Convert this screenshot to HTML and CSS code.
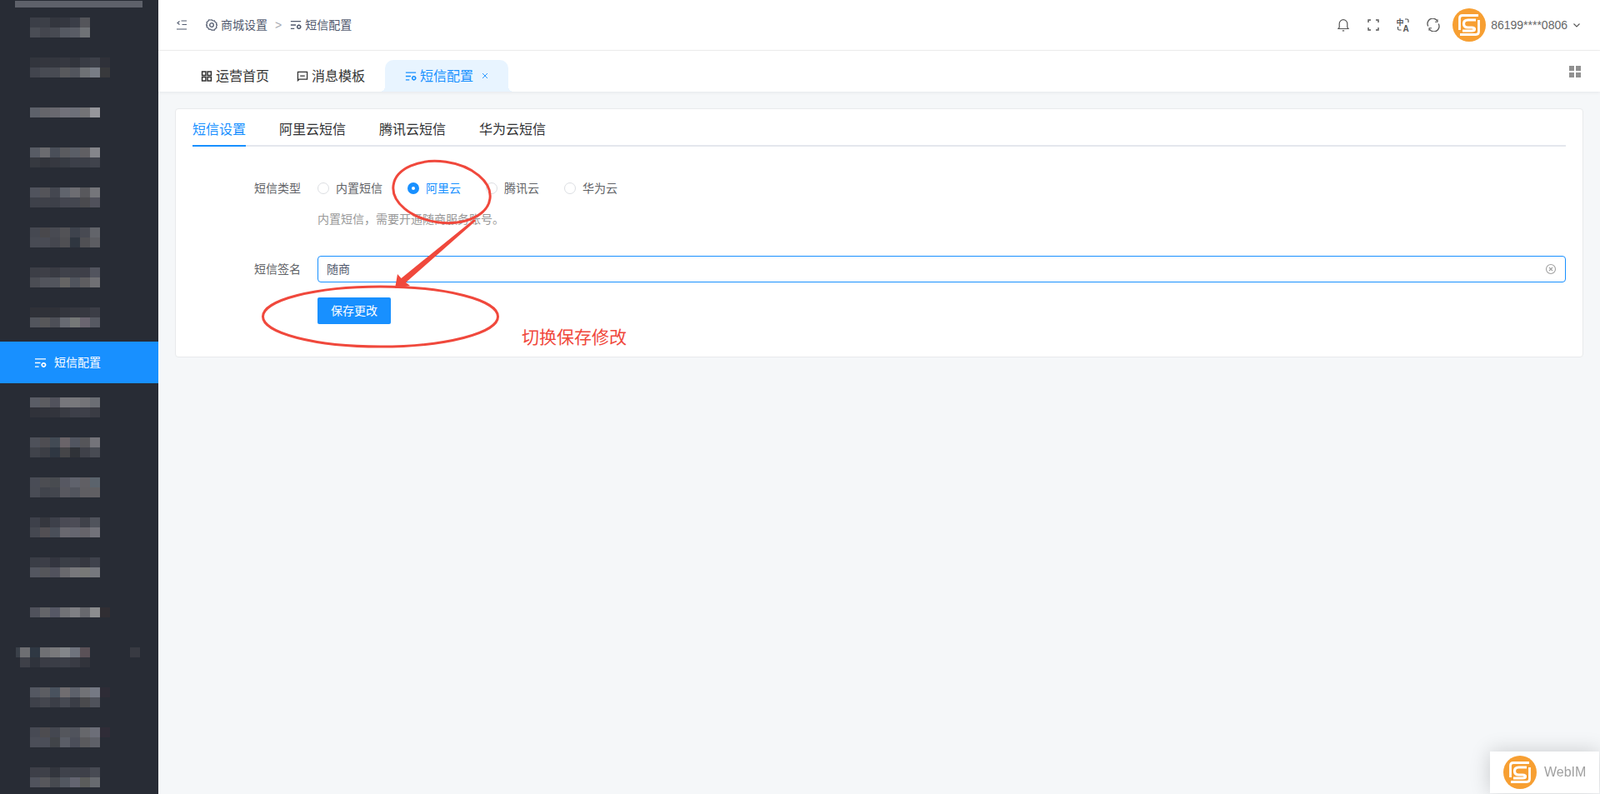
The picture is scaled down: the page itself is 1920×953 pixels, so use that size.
FILE: index.html
```html
<!DOCTYPE html>
<html lang="zh-CN">
<head>
  <meta charset="UTF-8" />
  <title>短信配置</title>
  <link rel="stylesheet" href="styles.css">
</head>
<body>
  <svg class="defs" width="0" height="0">
    <symbol id="icon-sms" viewBox="0 0 16 14">
      <path d="M1 2h14M1 7h7M1 12h5" fill="none" stroke="currentColor" stroke-width="1.500"/>
      <circle cx="12.200" cy="9.600" r="2.200" fill="none" stroke="currentColor" stroke-width="1.700"/>
      <path d="M12.200 6.400v1M12.200 11.800v1M9 9.600h1M14.400 9.600h1" stroke="currentColor" stroke-width="1.200"/>
    </symbol>
    <symbol id="logo-s" viewBox="0 0 40 40">
      <circle cx="20" cy="20" r="20" fill="#f79f32"/>
      <path d="M31 8.500H12q-3.500 0-3.500 3.500v14M9 31.500h19q3.500 0 3.500-3.500V14" fill="none" stroke="#fff" stroke-width="2.800"/>
      <path d="M28 14H18.500q-5 0-5 4.500t5 4.500h4.500q3.500 0 3.500 2t-3.500 2H12" fill="none" stroke="#fff" stroke-width="3.200"/>
    </symbol>
  </svg>

  <div class="layout">
    <aside class="sidebar">
      <div class="side-band"></div>
      <nav id="sideMenu">
        <a class="side-active" id="activeItem">
          <svg class="side-icon"><use href="#icon-sms"/></svg>
          <span class="zh">短信配置</span>
        </a>
      </nav>
    </aside>

    <main class="main">
      <header class="topbar">
        <div class="crumbs">
          <svg class="collapse" viewBox="0 0 12 12">
            <path d="M3.500 1.500 1 3.500l2.500 2M5.500 1H12M6.500 5.500H12M0 11h12" fill="none" stroke="#515a6e" stroke-width="1.100"/>
          </svg>
          <svg class="crumb-icon" viewBox="0 0 14 14">
            <path d="M7 .8l1.500 1.200 1.900-.2.800 1.800 1.700.9-.3 1.900L13.500 7l-.9 1.600.3 1.900-1.700.9-.8 1.800-1.900-.2L7 13.200l-1.500-1.200-1.900.2-.8-1.800-1.700-.9.3-1.900L.5 7l.9-1.600-.3-1.900 1.700-.9.8-1.800 1.900.2z" fill="none" stroke="#515a6e" stroke-width="1.200"/>
            <circle cx="7" cy="7" r="2.300" fill="none" stroke="#515a6e" stroke-width="1.300"/>
          </svg>
          <span class="zh">商城设置</span>
          <span class="crumb-sep">&gt;</span>
          <svg class="crumb-icon"><use href="#icon-sms"/></svg>
          <span class="zh">短信配置</span>
        </div>
        <div class="tools">
          <span class="tool">
            <svg viewBox="0 0 16 16"><path d="M2 12.500h12l-1.200-1.700V6.500a4.800 4.800 0 0 0-9.600 0v4.300zM6.800 14.800h2.400" fill="none" stroke="#555" stroke-width="1.200"/></svg>
          </span>
          <span class="tool">
            <svg viewBox="0 0 16 16"><path d="M5 2H2v3M11 2h3v3M5 14H2v-3M11 14h3v-3" fill="none" stroke="#555" stroke-width="1.400"/></svg>
          </span>
          <span class="tool">
            <svg viewBox="0 0 16 16">
              <text x="-.5" y="8" class="tr-zh">中</text>
              <text x="7.500" y="15.500" class="tr-en">A</text>
              <path d="M1.500 10v2.500q0 1.500 1.500 1.500h2.500M10 1h2.500q1.500 0 1.500 1.500V5" fill="none" stroke="#555" stroke-width="1.200"/>
            </svg>
          </span>
          <span class="tool">
            <svg viewBox="0 0 16 16"><path d="M1.800 9.500A6.300 6.300 0 0 1 12.800 3.300M14.200 6.500A6.300 6.300 0 0 1 3.200 12.700" fill="none" stroke="#555" stroke-width="1.300"/><path d="M13 1.200v3h-3M3 14.800v-3h3" fill="none" stroke="#555" stroke-width="1.100"/></svg>
          </span>
          <svg class="avatar"><use href="#logo-s"/></svg>
          <span class="user">86199****0806</span>
          <svg class="chevron" viewBox="0 0 8 5"><path d="M.5.500 4 4 7.500.5" fill="none" stroke="#555" stroke-width="1.100"/></svg>
        </div>
      </header>

      <div class="tabbar">
        <a class="tab">
          <svg class="tab-icon" viewBox="0 0 12 12"><path d="M1 1h4v4H1zM7 1h4v4H7zM1 7h4v4H1zM7 7h4v4H7z" fill="none" stroke="#333" stroke-width="1.400"/></svg>
          <span class="zh">运营首页</span>
        </a>
        <a class="tab">
          <svg class="tab-icon" viewBox="0 0 14 14"><path d="M1 12.500V1.500h12v9.500H2.500zM4 6.500h6" fill="none" stroke="#333" stroke-width="1.400"/></svg>
          <span class="zh">消息模板</span>
        </a>
        <a class="tab tab-current">
          <svg class="tab-icon"><use href="#icon-sms"/></svg>
          <span class="zh">短信配置</span>
          <svg class="tab-close" viewBox="0 0 8 8"><path d="M1 1l6 6M7 1 1 7" stroke="#1890ff" stroke-width=".9"/></svg>
        </a>
        <svg class="tab-more" viewBox="0 0 14 14"><path d="M0 0h6v6H0zM8 0h6v6H8zM0 8h6v6H0zM8 8h6v6H8z" fill="#909090"/></svg>
      </div>

      <section class="content">
        <div class="card">
          <div class="card-tabs">
            <a class="card-tab card-tab-on">短信设置</a>
            <a class="card-tab">阿里云短信</a>
            <a class="card-tab">腾讯云短信</a>
            <a class="card-tab">华为云短信</a>
          </div>

          <div class="form-row first-row">
            <label class="form-label zh">短信类型</label>
            <div class="radios">
              <span class="radio"><i class="dot"></i><span class="zh">内置短信</span></span>
              <span class="radio radio-on"><i class="dot"></i><span class="zh">阿里云</span></span>
              <span class="radio"><i class="dot"></i><span class="zh">腾讯云</span></span>
              <span class="radio"><i class="dot"></i><span class="zh">华为云</span></span>
            </div>
          </div>
          <p class="help">内置短信&#xFF0C;需要开通随商服务账号。</p>

          <div class="form-row">
            <label class="form-label zh" for="signInput">短信签名</label>
            <div class="input-box">
              <input id="signInput" class="zh" type="text" value="随商" />
              <svg class="clear" viewBox="0 0 14 14">
                <circle cx="7" cy="7" r="5.500" fill="none" stroke="#a0a0a0" stroke-width="1.100"/>
                <path d="M5 5l4 4M9 5 5 9" stroke="#a0a0a0" stroke-width="1.100"/>
              </svg>
            </div>
          </div>

          <button class="save-btn" type="button"><span class="zh">保存更改</span></button>
        </div>
      </section>

      <!-- screenshot markup drawn on top of the form -->
      <svg class="markup" viewBox="0 0 1920 953">
        <ellipse cx="530" cy="230.500" rx="58.500" ry="36.500" transform="rotate(8 530 230.500)" fill="none" stroke="#f0483c" stroke-width="3"/>
        <ellipse cx="456.500" cy="380" rx="141" ry="36" fill="none" stroke="#f0483c" stroke-width="3"/>
        <path d="M571 265 487 339 492 343 474 346 477 329 481.500 334 569 263Z" fill="#f0483c"/>
      </svg>
      <span class="markup-note">切换保存修改</span>
    </main>
  </div>

  <div class="webim">
    <svg class="webim-logo"><use href="#logo-s"/></svg>
    <span>WebIM</span>
  </div>

  <script src="sidebar.js"></script>
</body>
</html>
```

FILE: styles.css
```css
* {
  box-sizing: border-box;
}

html, body {
  margin: 0;
  height: 100%;
  overflow: hidden;
}

body {
  font-family: "Liberation Sans", "Noto Sans CJK SC", sans-serif;
  font-size: 14px;
  color: #515a6e;
  background-color: #f5f7f9;
}

.defs {
  display: none;
}

/* the CJK fallback sits a pixel low in the line */
.zh {
  padding-bottom: 2px;
}

.layout {
  display: flex;
  height: 953px;
}

/* Sidebar */
.sidebar {
  width: 190px;
  flex: none;
  height: 100%;
  overflow: hidden;
  background-color: #282c35;
}

.side-band {
  height: 8px;
  margin: 1px 19px 0 18px;
  background-color: #5e616a;
}

.mosaic-row {
  display: flex;
  height: 12px;
}

.mosaic-cell {
  width: 12px;
  height: 12px;
  flex: none;
}

.mosaic-cell.thin {
  width: 5px;
}

.side-active {
  display: flex;
  align-items: center;
  height: 50px;
  margin-top: 17px;
  padding-left: 41px;
  color: #fff;
  background-color: #1890ff;
}

.side-icon {
  width: 15px;
  height: 13px;
  margin-right: 9px;
}

/* Top bar */
.main {
  flex: 1;
  min-width: 0;
  position: relative;
  display: flex;
  flex-direction: column;
}

.topbar {
  height: 61px;
  flex: none;
  display: flex;
  align-items: center;
  justify-content: space-between;
  padding: 0 24px 0 22px;
  background-color: #fff;
  border-bottom: 1px solid #f0f0f0;
}

.crumbs {
  display: flex;
  align-items: center;
}

.collapse {
  width: 12px;
  height: 12px;
  margin-right: 23px;
}

.crumb-icon {
  width: 14px;
  height: 14px;
  margin-right: 4px;
  color: #515a6e;
}

.crumb-sep {
  margin: 0 10px 0 9px;
  color: #a8abb2;
}

.tools {
  display: flex;
  align-items: center;
}

.tool {
  width: 36px;
  display: flex;
  justify-content: center;
}

.tool svg {
  width: 16px;
  height: 16px;
}

.tr-zh {
  font-size: 9px;
  font-weight: bold;
  fill: #555;
}

.tr-en {
  font-size: 10px;
  font-weight: bold;
  fill: #555;
}

.avatar {
  width: 40px;
  height: 40px;
  margin-left: 5px;
}

.user {
  margin-left: 6px;
  color: #666;
}

.chevron {
  width: 8px;
  height: 5px;
  margin-left: 7px;
}

/* Page tabs */
.tabbar {
  height: 49px;
  flex: none;
  display: flex;
  align-items: flex-end;
  gap: 1px;
  padding-left: 35px;
  background-color: #fff;
  box-shadow: 0 1px 4px rgba(0, 21, 41, 0.07);
  position: relative;
}

.tab {
  height: 38px;
  display: flex;
  align-items: center;
  padding: 0 16px;
  font-size: 16px;
  color: #333;
  position: relative;
}

.tab-icon {
  width: 14px;
  height: 13px;
  margin-right: 4px;
}

.tab-current {
  width: 148px;
  margin-left: 7px;
  padding: 0 0 0 24px;
  color: #1890ff;
  background-color: #e8f4ff;
  border-radius: 10px 10px 0 0;
}

.tab-current::before,
.tab-current::after {
  content: "";
  position: absolute;
  bottom: 0;
  width: 6px;
  height: 6px;
}

.tab-current::before {
  left: -6px;
  background: radial-gradient(circle at 0 0, transparent 6px, #e8f4ff 6px);
}

.tab-current::after {
  right: -6px;
  background: radial-gradient(circle at 100% 0, transparent 6px, #e8f4ff 6px);
}

.tab-close {
  width: 8px;
  height: 8px;
  margin-left: 10px;
}

.tab-more {
  width: 14px;
  height: 14px;
  margin-left: auto;
  margin-right: 23px;
  align-self: flex-start;
  margin-top: 18px;
}

/* Content */
.content {
  flex: 1;
  padding: 20px 20px 0;
}

.card {
  height: 299px;
  padding: 0 20px;
  background-color: #fff;
  border: 1px solid #e8eaec;
  border-radius: 4px;
}

.card-tabs {
  display: flex;
  gap: 40px;
  height: 45px;
  border-bottom: 2px solid #e4e7ed;
}

.card-tab {
  height: 45px;
  line-height: 49px;
  font-size: 16px;
  color: #303133;
}

.card-tab-on {
  color: #1890ff;
  border-bottom: 2px solid #1890ff;
}

.form-row {
  display: flex;
  align-items: center;
  height: 32px;
}

.first-row {
  margin-top: 34px;
}

.form-label {
  width: 130px;
  margin-right: 20px;
  text-align: right;
  color: #606266;
}

.radios {
  display: flex;
  gap: 30px;
}

.radio {
  display: flex;
  align-items: center;
  gap: 8px;
  color: #606266;
}

.dot {
  width: 14px;
  height: 14px;
  border: 1px solid #dcdee2;
  border-radius: 50%;
  background-color: #fff;
}

.radio-on {
  color: #1890ff;
}

.radio-on .dot {
  border: 5px solid #1890ff;
}

.help {
  margin: 11px 0 34px 150px;
  height: 20px;
  line-height: 20px;
  font-size: 14px;
  color: #999;
}

.input-box {
  flex: 1;
  height: 32px;
  display: flex;
  align-items: center;
  padding: 0 10px;
  border: 1px solid #1890ff;
  border-radius: 4px;
}

.input-box input {
  flex: 1;
  min-width: 0;
  border: none;
  outline: none;
  padding: 0 0 2px;
  font: inherit;
  color: #515a6e;
}

.clear {
  width: 14px;
  height: 14px;
}

.save-btn {
  display: block;
  width: 88px;
  height: 32px;
  margin: 18px 0 0 150px;
  padding: 0 0 2px;
  border: none;
  border-radius: 2px;
  font: inherit;
  color: #fff;
  background-color: #1890ff;
}

/* Markup over the form */
.markup {
  position: absolute;
  left: -190px;
  top: 0;
  width: 1920px;
  height: 953px;
  pointer-events: none;
}

.markup-note {
  position: absolute;
  left: 436px;
  top: 390px;
  font-size: 21px;
  line-height: 30px;
  color: #f0483c;
}

/* WebIM */
.webim {
  position: fixed;
  right: 1px;
  bottom: 1px;
  width: 131px;
  height: 50px;
  display: flex;
  align-items: center;
  padding-left: 16px;
  gap: 9px;
  font-size: 16px;
  color: #a0a0a0;
  background-color: #fff;
  box-shadow: 0 0 24px rgba(0, 0, 0, 0.18);
}

.webim-logo {
  width: 40px;
  height: 40px;
}
```

FILE: sidebar.js
```js
// blurred menu rows, one entry per row: top y, left x, colour strips
const blocks = [
  { top: 21, rows: ["3b3e47 3c3f47 33363e 343740 3a3d47 54555a", "4a4d55 44464e 474a52 555962 595c65 6f7276"] },
  { top: 69, rows: ["32353d 34363e 33363e 363840 31343c 383b44 3c3f48 2f3139", "42454e 484b53 484b53 58595c 52555d 6e7175 787d86 38393c"] },
  { top: 129, rows: ["5d616a 65656a 69686f 71717a 6d7079 737376 97979c"] },
  { top: 177, rows: ["585c65 6b6b6f 4a4f59 5a5b5f 5a5e67 605f63 85868b", "363940 33353c 363840 373b43 3c3f49 3c3f48 40434c"] },
  { top: 225, rows: ["50535d 545459 444750 60646d 6d6d72 58585c 75767b", "3e414a 3f4149 3d4049 444650 444750 4a4a4e 50515b"] },
  { top: 273, rows: ["454851 49484c 484a52 525256 3e434d 484a52 62646a", "484b54 494b54 45474f 4f4f53 2f3640 505054 5c5d62"] },
  { top: 321, rows: ["3c3e46 3e3f47 393b43 3f414a 3e4049 3e3f48 52545e", "4b4d54 52545c 52555d 656464 50545d 5e5d60 707074"] },
  { top: 369, rows: ["2f3138 2f3138 2f3138 33353d 35373f 363840 3b3d46", "52555d 575759 4d4f57 676a72 757877 6a6570 565962"] },
  null, // the active item sits here
  { top: 477, rows: ["5a5d66 5c5c60 51525c 77777c 78787c 747478 6b6e74", "30323a 31333b 32343c 393b43 3d3f49 3e4049 3a3c44"] },
  { top: 525, rows: ["4e515a 4e4d52 424a54 6a6469 515560 555559 74747a", "40434b 3c3e45 2f3742 454548 2f3238 3f4149 484b53"] },
  { top: 573, rows: ["494c56 4c4d52 484b50 575862 5f626c 605f64 5b636c", "494c55 41444c 43464e 58585f 52555e 5f5e62 605f63"] },
  { top: 621, rows: ["3d404a 35373e 3d404a 4a4a54 4c4c56 3f4149 50535c", "454851 524f53 4a4f59 69686f 656670 66646a 72727a"] },
  { top: 669, rows: ["3a3d46 3c3e47 33353f 3a3e46 3a3d46 363840 3f424c", "535660 55565a 51525d 69696d 78787c 787977 76787e"] },
  { top: 729, rows: ["50525c 646569 565865 717276 7f7f84 67686d 8c8d8f 302e33"] },
  { top: 777, left: 19, rows: ["t3a4049 6e6f73 2f3843 6f7074 79797b 83868a 6f737d 5a5157 - - - - 383a42", "t- 3e4048 2f333c 3a3c45 3a3d46 3c3f48 393b44 31333b"] },
  { top: 825, rows: ["545862 5c5d62 49525e 706d70 5d616b 717276 757984 2e2c36", "3e414a 44464e 3b3e47 464952 3a3d46 4a4a4d 4f525b"] },
  { top: 873, rows: ["474a54 4d4c50 444750 54565c 50535c 66676b 6c6e78 2f2c37", "4b4e58 4b4e58 414449 5a5d66 4b4e59 5a5a5d 5e6068"] },
  { top: 921, rows: ["3d3f48 3e4048 32353d 3f424b 3e414a 3e4049 474a53", "50535d 57575b 474a50 525760 636470 5b5c5b 676a6f"] }
];

const menu = document.getElementById("sideMenu");
const activeItem = document.getElementById("activeItem");
let y = 9;

blocks.forEach((block) => {
  if (!block) {
    menu.appendChild(activeItem);
    y = 460;
    return;
  }

  const box = document.createElement("div");
  box.style.marginTop = (block.top - y) + "px";
  box.style.marginLeft = (block.left || 36) + "px";

  block.rows.forEach((row) => {
    const strip = document.createElement("div");
    strip.className = "mosaic-row";
    row.split(" ").forEach((code) => {
      const cell = document.createElement("span");
      cell.className = "mosaic-cell";
      if (code[0] === "t") {
        cell.classList.add("thin");
        code = code.slice(1);
      }
      if (code !== "-") cell.style.backgroundColor = "#" + code;
      strip.appendChild(cell);
    });
    box.appendChild(strip);
  });

  menu.appendChild(box);
  y = block.top + block.rows.length * 12;
});
```
